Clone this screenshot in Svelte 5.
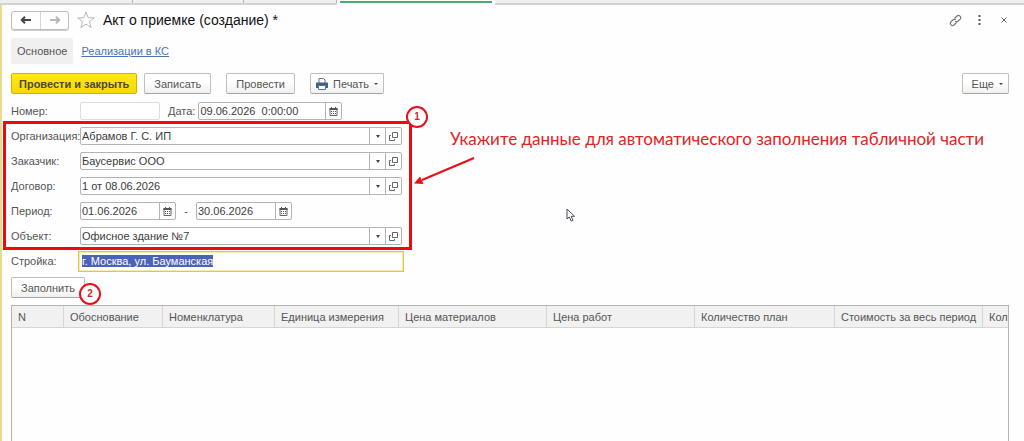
<script lang="ts">
  import { onMount } from "svelte";

  let organization = $state("Абрамов Г. С. ИП");
  let customer = $state("Баусервис ООО");
  let contract = $state("1 от 08.06.2026");
  let building = $state("Офисное здание №7");
  let site = $state("г. Москва, ул. Бауманская");
  let docNumber = $state("");
  let docDate = $state("09.06.2026  0:00:00");
  let periodStart = $state("01.06.2026");
  let periodEnd = $state("30.06.2026");

  let siteInput: HTMLInputElement;

  const columns = [
    { title: "N", width: 52 },
    { title: "Обоснование", width: 99 },
    { title: "Номенклатура", width: 112 },
    { title: "Единица измерения", width: 124 },
    { title: "Цена материалов", width: 148 },
    { title: "Цена работ", width: 148 },
    { title: "Количество план", width: 140 },
    { title: "Стоимость за весь период", width: 148 },
  ];

  onMount(() => {
    siteInput.focus();
    siteInput.select();
  });
</script>

{#snippet calendar()}
  <button type="button" class="addon" aria-label="Выбрать дату">
    <svg width="9" height="9" viewBox="0 0 9 9">
      <path d="M1 1.500h7v7H1z" fill="#fff" stroke="#666" />
      <path d="M.5 1h8v2h-8z" fill="#555" />
      <path d="M2.500 0v2M6.500 0v2" stroke="#555" />
      <path d="M2 4.500h5M2 6.500h5" stroke="#555" stroke-dasharray="1 1" />
    </svg>
  </button>
{/snippet}

{#snippet refButtons()}
  <button type="button" class="addon" aria-label="Выбрать из списка">
    <svg width="4" height="3" viewBox="0 0 4 3"><path d="M0 0h4L2 3z" fill="#444" /></svg>
  </button>
  <button type="button" class="addon" aria-label="Открыть">
    <svg width="9" height="9" viewBox="0 0 9 9" fill="none" stroke="#666">
      <path d="M3.500.5h5v5h-5z" />
      <path d="M2 3.500H.5v5h5V7" />
    </svg>
  </button>
{/snippet}

<div class="page">
  <div class="tabs">
    <span class="tab first"></span>
    <span class="tab second"></span>
    <span class="tab third"></span>
    <span class="tab active"></span>
  </div>

  <main>
    <header>
      <div class="history">
        <button type="button" aria-label="Назад">
          <svg width="12" height="8" viewBox="0 0 12 8" fill="none" stroke="#444" stroke-width="2">
            <path d="M1.500 4H11M5 .7 1.700 4 5 7.300" />
          </svg>
        </button>
        <button type="button" aria-label="Вперед">
          <svg width="12" height="8" viewBox="0 0 12 8" fill="none" stroke="#b8b8b8" stroke-width="2">
            <path d="M10.500 4H1M7 .7 10.300 4 7 7.300" />
          </svg>
        </button>
      </div>
      <button type="button" class="plain star" aria-label="В избранное">
        <svg width="18" height="18" viewBox="0 0 18 18" fill="#fff" stroke="#b4b8bc">
          <path d="M9 1l2.100 5.700 6.200.2-4.900 3.700 1.800 6L9 13.100l-5.200 3.500 1.800-6L.7 6.900l6.200-.2z" />
        </svg>
      </button>
      <h1>Акт о приемке (создание) *</h1>
      <div class="window-tools">
        <button type="button" class="plain" aria-label="Получить ссылку">
          <svg width="13" height="13" viewBox="0 0 13 13" fill="none" stroke="#777" stroke-width="1.200">
            <path d="M5.500 4.500 8 2a2.200 2.200 0 0 1 3.100 3.100L9.200 7a2.200 2.200 0 0 1-2.900.2" />
            <path d="M7.500 8.500 5 11a2.200 2.200 0 0 1-3.100-3.100L3.800 6a2.200 2.200 0 0 1 2.900-.2" />
          </svg>
        </button>
        <button type="button" class="plain" aria-label="Дополнительно">
          <svg width="3" height="10" viewBox="0 0 3 10" fill="#555">
            <path d="M.5 0h2v2h-2zM.5 4h2v2h-2zM.5 8h2v2h-2z" />
          </svg>
        </button>
        <button type="button" class="plain" aria-label="Закрыть">
          <svg width="6" height="6" viewBox="0 0 6 6" stroke="#666">
            <path d="M.5.5l5 5M5.500.5l-5 5" />
          </svg>
        </button>
      </div>
    </header>

    <nav>
      <span class="current">Основное</span>
      <a href="#ks">Реализации в КС</a>
    </nav>

    <div class="toolbar">
      <button type="button" class="btn primary">Провести и закрыть</button>
      <button type="button" class="btn">Записать</button>
      <button type="button" class="btn post">Провести</button>
      <button type="button" class="btn print">
        <svg width="12" height="12" viewBox="0 0 12 12">
          <path d="M3 5V.5h4.500L9 2v3" fill="#fff" stroke="#5d7388" />
          <path d="M0 5.500C0 4.700.5 4.500 1 4.500h10c.6 0 1 .4 1 1V10H0z" fill="#3d6187" />
          <path d="M2.500 7.500h7v4h-7z" fill="#fff" stroke="#5d7388" />
        </svg>
        Печать
        <svg class="caret" width="4" height="2" viewBox="0 0 4 2"><path d="M0 0h4L2 2z" fill="#444" /></svg>
      </button>
      <button type="button" class="btn more">
        Еще
        <svg class="caret" width="4" height="2" viewBox="0 0 4 2"><path d="M0 0h4L2 2z" fill="#444" /></svg>
      </button>
    </div>

    <form>
      <div class="row">
        <label for="number">Номер:</label>
        <div class="field number"><input id="number" bind:value={docNumber} /></div>
        <label class="date-label" for="date">Дата:</label>
        <div class="field datetime">
          <input id="date" bind:value={docDate} />
          {@render calendar()}
        </div>
      </div>

      <div class="marked">
        <div class="row">
          <label for="organization">Организация:</label>
          <div class="field"><input id="organization" bind:value={organization} />{@render refButtons()}</div>
        </div>
        <div class="row">
          <label for="customer">Заказчик:</label>
          <div class="field"><input id="customer" bind:value={customer} />{@render refButtons()}</div>
        </div>
        <div class="row">
          <label for="contract">Договор:</label>
          <div class="field"><input id="contract" bind:value={contract} />{@render refButtons()}</div>
        </div>
        <div class="row">
          <label for="period-start">Период:</label>
          <div class="field date"><input id="period-start" bind:value={periodStart} />{@render calendar()}</div>
          <span class="dash">-</span>
          <div class="field date">
            <input aria-label="Конец периода" bind:value={periodEnd} />
            {@render calendar()}
          </div>
        </div>
        <div class="row">
          <label for="building">Объект:</label>
          <div class="field"><input id="building" bind:value={building} />{@render refButtons()}</div>
        </div>

        <div class="frame"></div>
        <span class="badge one">1</span>
        <svg class="arrow" width="64" height="32" viewBox="0 0 64 32">
          <path d="M60 2 8 24" stroke="#e8101a" stroke-width="2.200" />
          <path d="M0 27.500l6-7 3.500 7.500z" fill="#e8101a" />
        </svg>
        <p class="callout">Укажите данные для автоматического заполнения табличной части</p>
        <svg class="cursor" width="10" height="14" viewBox="0 0 10 14">
          <path d="M1 1v10l2.300-2 1.900 4 1.800-.8L5.200 8.300h3.300z" fill="#fff" stroke="#444b5c" />
        </svg>
      </div>

      <div class="row">
        <label for="site">Стройка:</label>
        <div class="field focused"><input id="site" bind:this={siteInput} bind:value={site} /></div>
      </div>

      <div class="fill">
        <button type="button" class="btn">Заполнить</button>
        <span class="badge two">2</span>
      </div>
    </form>

    <div class="grid">
      <table>
        <thead>
          <tr>
            {#each columns as column}
              <th style="width: {column.width}px">{column.title}</th>
            {/each}
            <th>Кол</th>
          </tr>
        </thead>
      </table>
    </div>
  </main>
</div>

<style>
  :global(body) {
    margin: 0;
  }

  .page {
    display: flex;
    flex-direction: column;
    min-height: 100vh;
    box-sizing: border-box;
    background: #fefefe;
    color: #555;
    font-family: "Liberation Sans", Arial, sans-serif;
    font-size: 11px;
  }

  button,
  input {
    font: inherit;
    color: inherit;
    box-sizing: border-box;
    margin: 0;
  }

  svg {
    display: block;
    flex: none;
  }

  .tabs {
    display: flex;
    height: 5px;
    box-sizing: border-box;
    background: #efefef;
    border-bottom: 2px solid #d2d2d2;
  }

  .tab {
    box-sizing: border-box;
    border-right: 1px solid #b5b5b5;
  }

  .tab.first {
    width: 133px;
  }

  .tab.second {
    width: 111px;
  }

  .tab.third {
    width: 93px;
  }

  .tab.active {
    width: 158px;
    height: 5px;
    background: #4bab72;
    border: solid #fefefe;
    border-width: 1px 3px 2px;
  }

  main {
    flex: 1;
    display: flex;
    flex-direction: column;
    padding: 5px 15px 0 9px;
    border-left: 2px solid #eadb8c;
  }

  header {
    display: flex;
    align-items: center;
    height: 20px;
  }

  .history {
    display: flex;
    border: 1px solid #bdbdbd;
    border-radius: 3px;
    box-shadow: 0 1px 0 #ccc;
  }

  .history button {
    display: flex;
    align-items: center;
    justify-content: center;
    width: 28px;
    height: 17px;
    padding: 0;
    border: 0;
    background: none;
  }

  .history button + button {
    border-left: 1px solid #d5d5d5;
  }

  .plain {
    padding: 0;
    border: 0;
    background: none;
  }

  .star {
    margin: 0 8px;
  }

  h1 {
    margin: 0;
    font-size: 14px;
    font-weight: 400;
    color: #111;
  }

  .window-tools {
    display: flex;
    align-items: center;
    gap: 16px;
    margin-left: auto;
    padding-right: 2px;
  }

  .window-tools .plain:last-child {
    margin-left: 4px;
  }

  nav {
    display: flex;
    align-items: center;
    gap: 8px;
    margin-top: 8px;
  }

  .current {
    padding: 0 6px;
    line-height: 26px;
    background: #f0f0f0;
    border-radius: 2px;
  }

  a {
    color: #4a73b5;
  }

  .toolbar {
    display: flex;
    gap: 7px;
    margin-top: 9px;
  }

  .btn {
    display: flex;
    align-items: center;
    height: 21px;
    padding: 0 9px;
    border: 1px solid #bfbfbf;
    border-bottom-color: #a5a5a5;
    border-radius: 2px;
    background: linear-gradient(#fff 40%, #f0f0f0);
    white-space: nowrap;
  }

  .primary {
    padding: 0 7px;
    border-color: #d0b400;
    background: linear-gradient(#ffea1a, #f5d800);
    color: #4c4930;
    font-weight: 700;
  }

  .post {
    margin-left: 8px;
  }

  .print {
    gap: 5px;
    margin-left: 8px;
    padding: 0 5px;
  }

  .more {
    gap: 5px;
    margin-left: auto;
    padding-right: 5px;
  }

  form {
    display: flex;
    flex-direction: column;
    gap: 7px;
    margin-top: 8px;
  }

  .row {
    display: flex;
    align-items: center;
    height: 18px;
  }

  label {
    width: 69px;
    white-space: nowrap;
  }

  .date-label {
    width: auto;
    padding: 0 3px 0 8px;
  }

  .field {
    display: flex;
    width: 322px;
    height: 18px;
    box-sizing: border-box;
    border: 1px solid #b3b3b3;
    border-radius: 2px;
    background: #fff;
  }

  .field input {
    flex: 1;
    min-width: 0;
    padding: 0 1px;
    border: 0;
    outline: 0;
    background: none;
    color: #3c3c3c;
    white-space: pre;
  }

  .number {
    width: 80px;
    border-color: #dedede;
  }

  .datetime {
    width: 144px;
  }

  .date {
    width: 96px;
  }

  .addon {
    display: flex;
    align-items: center;
    justify-content: center;
    width: 16px;
    padding: 0;
    border: 0;
    border-left: 1px solid #b3b3b3;
    background: none;
  }

  .dash {
    width: 20px;
    text-align: center;
  }

  .focused {
    width: 326px;
    height: 21px;
    margin-left: -2px;
    padding: 0 2px;
    border: 1px solid #e6c63c;
    border-radius: 0;
    box-shadow: inset 0 0 0 1px #f6e9b0;
  }

  .focused input::selection {
    background: #4a62b8;
    color: #fff;
  }

  .marked {
    position: relative;
    display: flex;
    flex-direction: column;
    gap: 7px;
  }

  .frame {
    position: absolute;
    top: -6px;
    left: -8px;
    width: 409px;
    height: 129px;
    box-sizing: border-box;
    border: 3px solid #ee0a0c;
    pointer-events: none;
  }

  .badge {
    position: absolute;
    width: 22px;
    height: 22px;
    box-sizing: border-box;
    border: 2px solid #e8101a;
    border-radius: 50%;
    background: #fff;
    color: #c8282c;
    font-size: 10px;
    font-weight: 700;
    line-height: 18px;
    text-align: center;
  }

  .one {
    top: -21px;
    left: 395px;
  }

  .two {
    top: 6px;
    left: 68px;
  }

  .arrow {
    position: absolute;
    top: 29px;
    left: 403px;
  }

  .callout {
    position: absolute;
    top: 0;
    left: 439px;
    margin: 0;
    color: #e2231f;
    font-family: Lato, "Open Sans", sans-serif;
    font-size: 17px;
    line-height: 24px;
    white-space: nowrap;
  }

  .cursor {
    position: absolute;
    top: 81px;
    left: 555px;
  }

  .fill {
    position: relative;
    display: flex;
  }

  .grid {
    flex: 1;
    margin-top: 7px;
    border: 1px solid #b3b3b3;
    border-bottom: 0;
  }

  table {
    width: 100%;
    table-layout: fixed;
    border-collapse: separate;
    border-spacing: 0;
  }

  th {
    height: 22px;
    box-sizing: border-box;
    padding: 0 6px;
    border: solid #d5d5d5;
    border-width: 0 1px 1px 0;
    background: #f1f1f1;
    font-weight: 400;
    text-align: left;
    white-space: nowrap;
  }

  th:last-child {
    padding-right: 0;
    border-right: 0;
  }
</style>
